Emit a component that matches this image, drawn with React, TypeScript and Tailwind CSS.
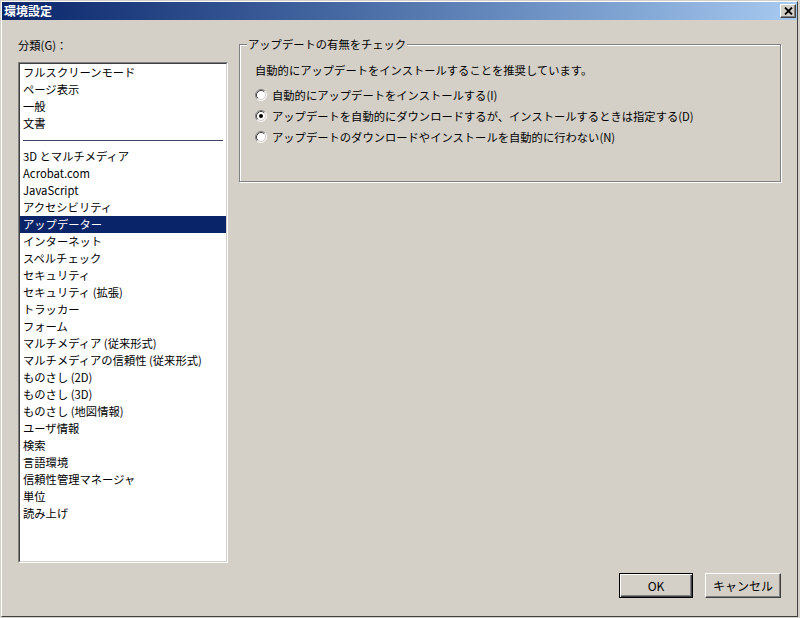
import React from "react";

const items: (string | null)[] = [
  "フルスクリーンモード",
  "ページ表示",
  "一般",
  "文書",
  null,
  "3D とマルチメディア",
  "Acrobat.com",
  "JavaScript",
  "アクセシビリティ",
  "アップデーター",
  "インターネット",
  "スペルチェック",
  "セキュリティ",
  "セキュリティ (拡張)",
  "トラッカー",
  "フォーム",
  "マルチメディア (従来形式)",
  "マルチメディアの信頼性 (従来形式)",
  "ものさし (2D)",
  "ものさし (3D)",
  "ものさし (地図情報)",
  "ユーザ情報",
  "検索",
  "言語環境",
  "信頼性管理マネージャ",
  "単位",
  "読み上げ",
];

function Radio({ checked }: { checked?: boolean }) {
  return (
    <svg width="12" height="12" viewBox="0 0 12 12" className="shrink-0">
      <circle cx="6" cy="6" r="5" fill="#ffffff" />
      <path d="M2.11 9.89 A5.5 5.5 0 0 1 9.89 2.11" fill="none" stroke="#808080" strokeWidth="1" />
      <path d="M9.89 2.11 A5.5 5.5 0 0 1 2.11 9.89" fill="none" stroke="#ffffff" strokeWidth="1" />
      <path d="M2.82 9.18 A4.5 4.5 0 0 1 9.18 2.82" fill="none" stroke="#404040" strokeWidth="1" />
      <path d="M9.18 2.82 A4.5 4.5 0 0 1 2.82 9.18" fill="none" stroke="#d4d0c8" strokeWidth="1" />
      {checked && <circle cx="6" cy="6" r="2" fill="#000000" />}
    </svg>
  );
}

export default function App() {
  return (
    <div className="w-[800px] h-[618px] bg-[#d4d0c8] pl-px pt-px font-['Noto_Sans_CJK_JP','Noto_Sans',sans-serif] text-[11.3px] text-black">
      <div className="w-[797px] h-[616px] border-l border-t border-r border-b border-l-white border-t-white border-r-[#404040] border-b-[#404040] flex flex-col">
        {/* Title bar */}
        <div className="h-[18px] bg-gradient-to-r from-[#0a246a] to-[#a6caf0] flex items-center justify-between pl-[2px] pr-[1px]">
          <span className="text-white font-bold text-[12px] leading-[18px]">環境設定</span>
          <div className="w-[16px] h-[14px] bg-[#d4d0c8] border border-t-white border-l-white border-r-[#404040] border-b-[#404040] shadow-[inset_-1px_-1px_0_#808080] flex items-center justify-center">
            <svg width="9" height="8" viewBox="0 0 9 8">
              <path d="M1 0.5 L8 7.5 M8 0.5 L1 7.5" stroke="#000" strokeWidth="1.8" />
            </svg>
          </div>
        </div>

        {/* Body */}
        <div className="flex-1 flex">
          {/* Left column */}
          <div className="pl-[16px] pt-[17px] flex flex-col">
            <div className="h-[16px] leading-[16px]">分類(G)：</div>
            <div className="mt-[9px] w-[210px] h-[501px] border border-t-[#808080] border-l-[#808080] border-r-white border-b-white">
              <div className="w-full h-full border border-t-[#404040] border-l-[#404040] border-r-[#d4d0c8] border-b-[#d4d0c8] bg-white overflow-hidden">
                {items.map((it, i) =>
                  it === null ? (
                    <div key={i} className="h-[16px] flex items-center px-[3px]">
                      <div className="w-full h-px bg-[#3c4660]" />
                    </div>
                  ) : it === "アップデーター" ? (
                    <div key={i} className="h-[17px] leading-[17px] pl-[3px] bg-[#0a246a] text-white whitespace-nowrap">
                      {it}
                    </div>
                  ) : (
                    <div key={i} className="h-[17px] leading-[17px] pl-[3px] whitespace-nowrap">
                      {it}
                    </div>
                  )
                )}
              </div>
            </div>
          </div>

          {/* Right column */}
          <div className="flex-1 ml-[11px] pr-[16px] pt-[24px] pb-[18px] flex flex-col">
            <div className="relative h-[138px] border border-[#808080] shadow-[inset_1px_1px_0_#ffffff,1px_1px_0_#ffffff] pl-[15px] pt-[17px]">
              <span className="absolute left-[7px] top-[-9px] px-[1px] bg-[#d4d0c8] leading-[16px]">
                アップデートの有無をチェック
              </span>
              <div className="leading-[16px]">自動的にアップデートをインストールすることを推奨しています。</div>
              <div className="mt-[9px] flex flex-col gap-[5px]">
                <div className="h-[16px] flex items-center gap-[5px]">
                  <Radio />
                  <span className="leading-[16px]">自動的にアップデートをインストールする(I)</span>
                </div>
                <div className="h-[16px] flex items-center gap-[5px]">
                  <Radio checked />
                  <span className="leading-[16px]">アップデートを自動的にダウンロードするが、インストールするときは指定する(D)</span>
                </div>
                <div className="h-[16px] flex items-center gap-[5px]">
                  <Radio />
                  <span className="leading-[16px]">アップデートのダウンロードやインストールを自動的に行わない(N)</span>
                </div>
              </div>
            </div>

            <div className="mt-auto flex justify-end gap-[12px]">
              <div className="w-[74px] h-[25px] border border-black shadow-[inset_1px_1px_0_#ffffff,inset_-1px_-1px_0_#404040,inset_-2px_-2px_0_#808080] flex items-center justify-center text-[12px]">
                OK
              </div>
              <div className="w-[76px] h-[25px] border border-t-white border-l-white border-r-[#404040] border-b-[#404040] shadow-[inset_-1px_-1px_0_#808080] flex items-center justify-center text-[12px]">
                キャンセル
              </div>
            </div>
          </div>
        </div>
      </div>
    </div>
  );
}
